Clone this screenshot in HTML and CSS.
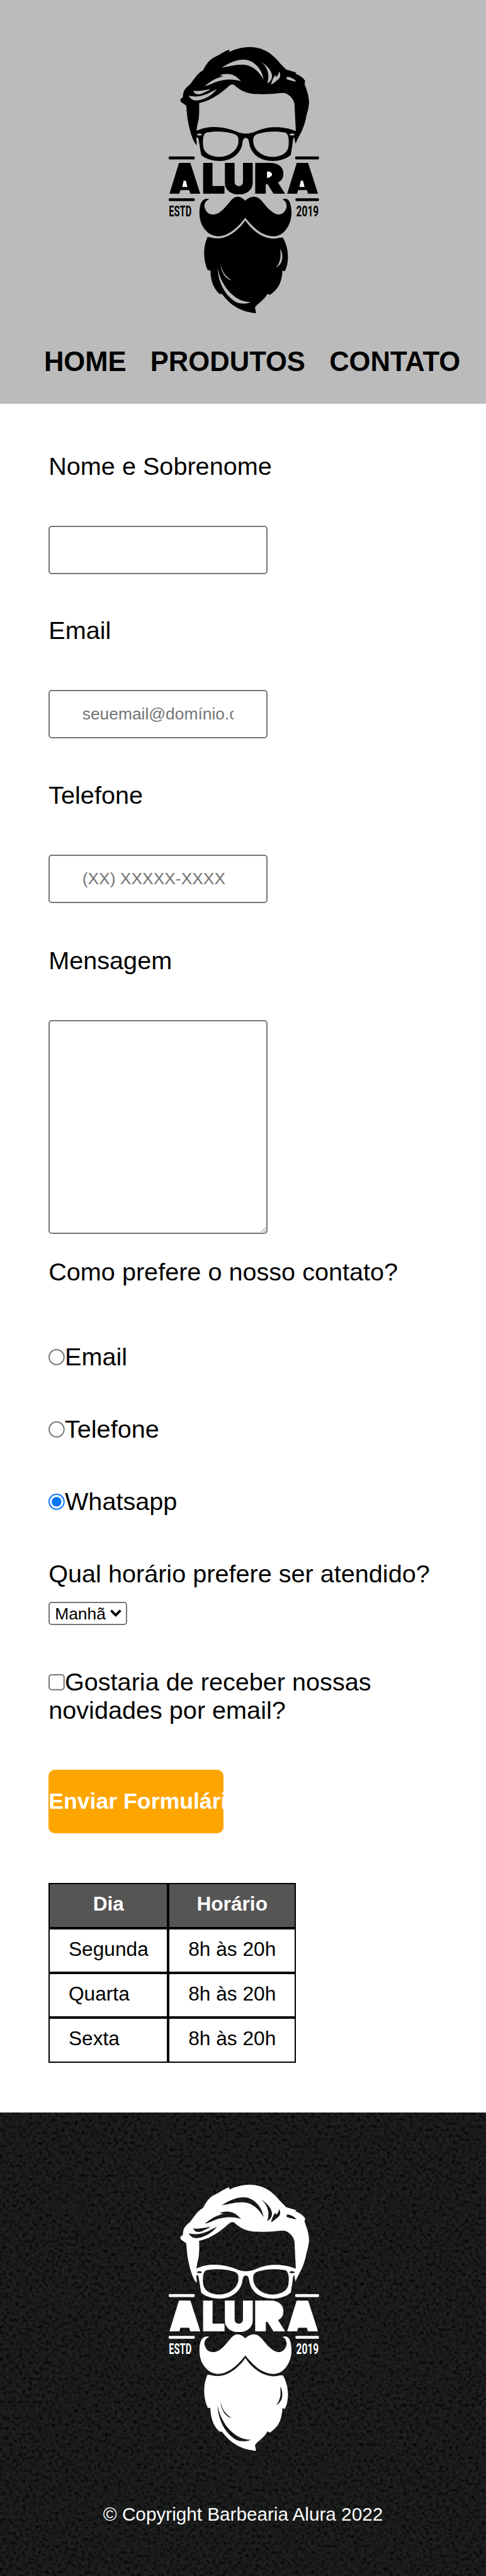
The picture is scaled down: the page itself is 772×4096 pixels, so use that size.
FILE: index.html
```html
<!DOCTYPE html>
<html lang="pt-br">
<head>
<meta charset="utf-8">
<title>Contato - Barbearia Alura</title>
<link rel="stylesheet" href="styles.css">
</head>
<body>
<header class="header">
  <svg class="logo" viewBox="0 0 1260 2040" role="img" aria-label="Alura">
    <defs>
      <symbol id="logo" viewBox="0 0 1260 2040">
        <g transform="scale(1 1.301)" fill="currentColor" fill-rule="evenodd">
          <!-- hair -->
          <path d="M160 347L180 333C180 300 195 285 228 265C260 235 285 200 325 184C345 155 370 125 405 113C440 100 480 78 513 70L517 82C560 65 610 56 660 55C760 55 830 95 880 145L925 180L1000 197L990 203C1025 212 1045 225 1062 243L1058 260C1075 300 1090 325 1090 365C1088 400 1075 420 1068 450C1055 500 1030 535 1012 560L992 592L985 565L995 525L985 370C975 335 935 308 895 310C830 316 780 318 720 316C650 316 600 300 560 272C545 260 530 260 515 270C470 300 400 350 297 367C298 400 298 430 293 460C282 490 280 510 275 530L280 600C260 590 235 540 222 490C210 450 208 410 203 380L165 360Z
          M460 170C520 140 570 125 620 125C680 125 750 170 762 235C735 200 690 155 610 153C550 153 500 165 460 170Z
          M742 135C790 160 820 185 823 215C823 235 808 250 788 258C808 210 795 170 742 135Z
          M873 190C888 205 885 225 862 238C845 248 830 260 815 264C825 240 830 225 848 210L850 222C865 215 872 205 873 190Z
          M930 220C955 222 985 232 1000 247C975 245 950 240 928 234Z
          M338 272C370 250 420 225 472 217L445 212C500 198 550 200 600 246C530 225 440 240 400 255C380 262 360 268 338 272Z
          M255 298C290 302 330 295 382 288C345 305 310 318 290 318C270 318 258 308 255 298Z
          M222 325C290 340 350 320 425 288C390 325 330 350 275 352C250 352 230 340 222 325Z"/>
          <!-- glasses -->
          <path d="M272 522C330 503 370 498 430 500C510 502 560 525 600 533C620 537 650 537 670 533C720 522 760 500 850 500C910 500 950 508 998 522L1000 552L976 562C972 590 965 625 958 655C930 675 880 688 830 688C740 688 680 655 661 600C656 575 653 560 633 560C615 560 612 575 607 600C590 650 530 688 445 688C390 688 340 675 312 655C305 625 298 590 292 562L270 552Z
          M350 530C400 521 500 522 555 540C580 550 582 560 580 585C575 625 520 665 440 665C390 665 345 650 330 620C323 600 323 580 326 560C329 545 335 535 350 530Z
          M918 530C868 521 768 522 713 540C688 550 686 560 688 585C693 625 748 665 828 665C878 665 923 650 938 620C945 600 945 580 942 560C939 545 933 535 918 530Z
          M278 541Q298 529 320 541Q298 553 278 541ZM946 541Q967 529 990 541Q967 553 946 541Z"/>
          <!-- rules -->
          <rect x="77" y="663" width="188" height="16" rx="6"/>
          <rect x="990" y="663" width="172" height="16" rx="6"/>
          <rect x="77" y="895" width="188" height="16" rx="6"/>
          <rect x="992" y="895" width="170" height="16" rx="6"/>
          <!-- moustache -->
          <path d="M630 908C650 895 670 885 695 886C740 888 760 925 800 955C830 975 850 985 875 985C910 982 930 955 928 935C926 915 912 905 898 902C930 890 950 905 958 935C968 975 965 1015 940 1050C915 1085 880 1105 840 1106C760 1106 700 1070 630 1003C570 1065 500 1106 430 1106C380 1105 345 1080 322 1050C298 1015 295 975 303 940C312 905 340 892 370 900C345 908 335 920 335 942C345 970 365 985 395 985C430 985 455 970 490 940C520 915 540 886 575 886C600 887 615 898 630 908Z"/>
          <!-- beard -->
          <path d="M630 1018C690 1085 760 1116 830 1119C855 1119 880 1113 900 1113C925 1140 938 1185 938 1220C937 1255 930 1280 915 1300L898 1297C895 1360 870 1400 808 1432L790 1425C770 1460 715 1480 700 1502L708 1533C640 1530 540 1510 462 1427L445 1427C405 1400 380 1360 378 1295L360 1295C330 1250 320 1170 358 1110C380 1112 400 1119 430 1118C500 1118 580 1075 630 1018Z
          M885 1180C905 1210 905 1260 852 1280C885 1250 888 1220 882 1180Z
          M430 1280C450 1370 540 1470 670 1472C640 1482 600 1482 570 1475C490 1440 435 1370 430 1280Z
          M452 1262C465 1310 490 1330 530 1350C495 1348 455 1310 452 1262Z"/>
          <!-- filled centres of the wordmark -->
          <path d="M170 740H220L245 850H145ZM1016 740H1066L1091 850H991ZM750 730H830V800H750Z"/>
        </g>
        <g class="wordmark">
          <text x="83" y="1128" textLength="222" lengthAdjust="spacingAndGlyphs">A</text>
          <text x="317" y="1128" textLength="166" lengthAdjust="spacingAndGlyphs">L</text>
          <text x="474" y="1128" textLength="219" lengthAdjust="spacingAndGlyphs">U</text>
          <text x="692" y="1128" textLength="220" lengthAdjust="spacingAndGlyphs">R</text>
          <text x="933" y="1128" textLength="222" lengthAdjust="spacingAndGlyphs">A</text>
        </g>
        <g class="tagline">
          <text x="78" y="1294" textLength="164" lengthAdjust="spacingAndGlyphs">ESTD</text>
          <text x="998" y="1294" textLength="162" lengthAdjust="spacingAndGlyphs">2019</text>
        </g>
        <path transform="scale(1 1.301)" fill="#fff" d="M185 797H200L212 832H175ZM1031 797H1046L1058 832H1021ZM787 747H800Q820 750 824 763Q815 780 787 782Z"/>
      </symbol>
    </defs>
    <use href="#logo"/>
  </svg>
  <nav class="nav">
    <a class="nav-link">HOME</a>
    <a class="nav-link">PRODUTOS</a>
    <a class="nav-link">CONTATO</a>
  </nav>
</header>
<main class="main">
  <form class="form">
    <label class="label" for="nome">Nome e Sobrenome</label>
    <input class="field" id="nome" type="text">
    <label class="label" for="email">Email</label>
    <input class="field" id="email" type="email" placeholder="seuemail@domínio.com">
    <label class="label" for="telefone">Telefone</label>
    <input class="field field-phone" id="telefone" type="tel" placeholder="(XX) XXXXX-XXXX">
    <label class="label" for="mensagem">Mensagem</label>
    <textarea class="field message" id="mensagem"></textarea>
    <p class="question contact">Como prefere o nosso contato?</p>
    <label class="choice"><input class="check" type="radio" name="contato">Email</label>
    <label class="choice"><input class="check" type="radio" name="contato">Telefone</label>
    <label class="choice"><input class="check" type="radio" name="contato" checked>Whatsapp</label>
    <p class="question hours">Qual horário prefere ser atendido?</p>
    <div class="select-box">
      <select class="select"><option>Manhã</option><option>Tarde</option><option>Noite</option></select>
      <svg class="arrow" viewBox="0 0 9 6" aria-hidden="true"><path d="M.7 .8L4.5 4.7L8.3 .8"/></svg>
    </div>
    <label class="choice news"><input class="check" type="checkbox">Gostaria de receber nossas novidades por email?</label>
    <button class="submit" type="button">Enviar Formulário</button>
  </form>
  <table class="table">
    <thead><tr><th>Dia</th><th>Horário</th></tr></thead>
    <tbody>
      <tr><td>Segunda</td><td>8h às 20h</td></tr>
      <tr><td>Quarta</td><td>8h às 20h</td></tr>
      <tr><td>Sexta</td><td>8h às 20h</td></tr>
    </tbody>
  </table>
</main>
<footer class="footer">
  <svg class="texture" aria-hidden="true">
    <filter id="grain" x="0" y="0" width="100%" height="100%" color-interpolation-filters="sRGB">
      <feTurbulence type="fractalNoise" baseFrequency="0.38" numOctaves="2" seed="7"/>
      <feColorMatrix values="1 0 0 0 0  1 0 0 0 0  1 0 0 0 0  0 0 0 0 1"/>
      <feComponentTransfer>
        <feFuncR type="table" tableValues="0.02 0.02 0.035 0.075 0.1 0.115 0.122 0.13 0.135"/>
        <feFuncG type="table" tableValues="0.02 0.02 0.035 0.08 0.108 0.122 0.13 0.138 0.14"/>
        <feFuncB type="table" tableValues="0.02 0.02 0.035 0.078 0.104 0.118 0.126 0.133 0.14"/>
      </feComponentTransfer>
    </filter>
    <rect width="100%" height="100%" filter="url(#grain)"/>
  </svg>
  <svg class="logo logo-light" viewBox="0 0 1260 2040" role="img" aria-label="Alura"><use href="#logo"/></svg>
  <p class="copyright">© Copyright Barbearia Alura 2022</p>
</footer>
</body>
</html>
```
FILE: styles.css
```css
* { box-sizing: border-box; }

html { background: #fff; }

body {
  margin: 0;
  zoom: 1.9806;
  font-family: "Liberation Sans", Arial, sans-serif;
  color: #000;
}

.header {
  height: 324px;
  padding-top: 30px;
  background: #bbb;
}

.logo {
  display: block;
  width: 140px;
  height: 226.67px;
  margin: 0 auto 0 126.6px;
  color: #000;
}

.logo-light { color: #fff; }

.wordmark {
  font-family: Inter, sans-serif;
  font-size: 292px;
  font-weight: 900;
  fill: currentColor;
  stroke: currentColor;
  stroke-width: 10px;
}

.tagline {
  font-family: Roboto, sans-serif;
  font-size: 106px;
  font-weight: 700;
  fill: currentColor;
}

.nav {
  display: flex;
  gap: 19.3px;
  padding: 21.3px 0 0 35.3px;
}

.nav-link {
  font-size: 22px;
  font-weight: 700;
  line-height: 25px;
  white-space: nowrap;
}

.main { padding: 39px 39px 40px; }

.form { display: flex; flex-direction: column; align-items: flex-start; }

.label { font-size: 20px; line-height: 23px; }

.field {
  width: 175.5px;
  height: 39px;
  margin: 36px 0 34px;
  padding: 0 26px;
  border: 1.02px solid #767676;
  border-radius: 2.5px;
  background: #fff;
  font-family: inherit;
  font-size: 13.333px;
}

.field-phone { margin-bottom: 35px; }

.message { height: 171.5px; margin-bottom: 19.5px; }

.question { margin: 0; font-size: 20px; line-height: 23px; white-space: nowrap; }

.contact { margin-bottom: 45px; }

.choice { margin-bottom: 35px; font-size: 20px; line-height: 23px; }

.check { width: 13px; height: 13px; margin: 0; }

.hours { margin-bottom: 11px; }

.select-box {
  position: relative;
  display: flex;
  margin-bottom: 34px;
}

.select {
  appearance: none;
  width: 63px;
  height: 19px;
  margin: 0;
  padding: 0 4px;
  border: 1.02px solid #767676;
  border-radius: 2.5px;
  background: #fff;
  color: #000;
  font-family: inherit;
  font-size: 13.333px;
}

/* chevron drawn over the select's right edge */
.arrow {
  position: absolute;
  top: 6.3px;
  right: 4.5px;
  width: 9px;
  height: 6px;
  fill: none;
  stroke: #000;
  stroke-width: 1.9;
  pointer-events: none;
}

.news { margin-bottom: 36px; }

.submit {
  width: 140px;
  height: 51px;
  margin: 0 0 40px;
  padding: 0;
  overflow: hidden;
  border: 0;
  border-radius: 5px;
  background: orange;
  color: #fff;
  font-family: inherit;
  font-size: 18px;
  font-weight: 700;
  text-align: left;
  white-space: nowrap;
}

.table { border-spacing: 0; font-size: 16px; line-height: 18px; }

.table th,
.table td {
  height: 36px;
  padding: 7px 15px 9px;
  border: 1.02px solid #000;
  white-space: nowrap;
}

.table th { background: #555; color: #fff; }

.footer {
  position: relative;
  height: 372.1px;
  padding-top: 50px;
  background: #1b1d1c;
}

.texture { position: absolute; inset: 0; width: 100%; height: 100%; }

.footer .logo,
.copyright { position: relative; }

.copyright {
  margin: 37.5px 0 0;
  color: #fff;
  font-size: 15px;
  line-height: 17px;
  text-align: center;
}
```
